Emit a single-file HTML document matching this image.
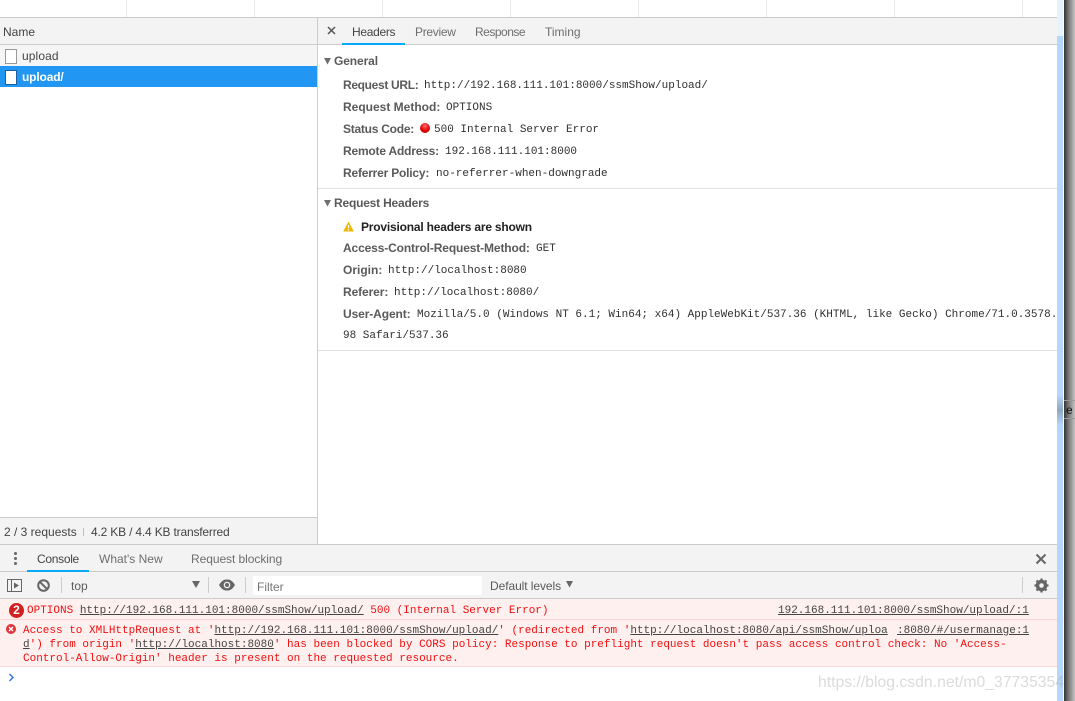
<!DOCTYPE html>
<html><head><meta charset="utf-8"><style>
html,body{margin:0;padding:0;background:#fff}
#p{position:relative;width:1075px;height:701px;overflow:hidden;background:#fff;font-family:"Liberation Sans",sans-serif;font-size:12px;color:#333}
#p div,#p span.a,#p svg{position:absolute}
.t{white-space:pre;line-height:16px;height:16px}
.m{font-family:"Liberation Mono",monospace;font-size:11px;white-space:pre;line-height:14px;height:14px}
.l{color:#5a5a5a;font-weight:bold;font-size:12px}
.g{color:#5a5a5a}
.k{color:#303030}
.r{color:#f00f0f}
u{color:#444;text-decoration:underline}
</style></head><body><div id="p">
<!-- top strip -->
<div style="left:126px;top:0;width:1px;height:17px;background:#e6e6e6"></div>
<div style="left:254px;top:0;width:1px;height:17px;background:#e6e6e6"></div>
<div style="left:382px;top:0;width:1px;height:17px;background:#e6e6e6"></div>
<div style="left:510px;top:0;width:1px;height:17px;background:#e6e6e6"></div>
<div style="left:638px;top:0;width:1px;height:17px;background:#e6e6e6"></div>
<div style="left:766px;top:0;width:1px;height:17px;background:#e6e6e6"></div>
<div style="left:894px;top:0;width:1px;height:17px;background:#e6e6e6"></div>
<div style="left:1022px;top:0;width:1px;height:17px;background:#e6e6e6"></div>
<div style="left:0;top:17px;width:1057px;height:1px;background:#ccc"></div>
<!-- header bar -->
<div style="left:0;top:18px;width:1057px;height:26px;background:#f3f3f3"></div>
<div style="left:0;top:44px;width:1057px;height:1px;background:#ccc"></div>
<div style="left:317px;top:18px;width:1px;height:527px;background:#ccc"></div>
<div class="t g" style="left:3px;top:24px;color:#444">Name</div>
<!-- rows -->
<div style="left:0;top:45px;width:317px;height:21px;background:#f5f5f5"></div>
<div style="left:0;top:66px;width:317px;height:21px;background:#2196f3"></div>
<div style="left:5px;top:49px;width:10px;height:13px;background:#fff;border:1px solid #999"></div>
<div style="left:5px;top:70px;width:10px;height:13px;background:#fff;border:1px solid #1a5fa0"></div>
<div class="t" style="left:22px;top:48px;color:#444;letter-spacing:.1px">upload</div>
<div class="t" style="left:22px;top:69px;color:#fff;font-weight:bold;letter-spacing:-.15px">upload/</div>
<!-- status bar -->
<div style="left:0;top:517px;width:317px;height:1px;background:#ccc"></div>
<div style="left:0;top:518px;width:317px;height:27px;background:#f3f3f3"></div>
<div class="t" style="left:4px;top:524px;color:#444">2 / 3 requests</div>
<div style="left:83px;top:528px;width:1px;height:8px;background:#9cc8e0"></div>
<div class="t" style="left:91px;top:524px;color:#444;letter-spacing:-.18px">4.2 KB / 4.4 KB transferred</div>
<!-- tabs -->
<svg style="left:327px;top:26px" width="9" height="9" viewBox="0 0 9 9"><path d="M1 1L8 8M8 1L1 8" stroke="#555" stroke-width="1.500"/></svg>
<div style="left:342px;top:43px;width:63px;height:2px;background:#03a9f4"></div>
<div class="t" style="left:352px;top:24px;color:#444;letter-spacing:-.3px">Headers</div>
<div class="t" style="left:415px;top:24px;color:#6e6e6e;letter-spacing:-.3px">Preview</div>
<div class="t" style="left:475px;top:24px;color:#6e6e6e;letter-spacing:-.5px">Response</div>
<div class="t" style="left:545px;top:24px;color:#6e6e6e">Timing</div>
<!-- General -->
<svg style="left:324px;top:58px" width="8" height="7"><path d="M0 0H7L3.500 6.500Z" fill="#6e6e6e"/></svg>
<div class="t l" style="left:334px;top:53px;letter-spacing:-.1px">General</div>
<div class="t l" style="left:343px;top:77px;letter-spacing:-.33px">Request URL:</div><div class="m k" style="left:424px;top:79px">http://192.168.111.101:8000/ssmShow/upload/</div>
<div class="t l" style="left:343px;top:99px">Request Method:</div><div class="m k" style="left:446px;top:101px">OPTIONS</div>
<div class="t l" style="left:343px;top:121px;letter-spacing:-.25px">Status Code:</div>
<div style="left:420px;top:123px;width:10px;height:10px;border-radius:50%;background:radial-gradient(circle at 50% 30%,#ff6b6b,#e00000 55%,#b00000)"></div>
<div class="m k" style="left:434px;top:123px">500 Internal Server Error</div>
<div class="t l" style="left:343px;top:143px;letter-spacing:-.2px">Remote Address:</div><div class="m k" style="left:445px;top:145px">192.168.111.101:8000</div>
<div class="t l" style="left:343px;top:165px;letter-spacing:-.2px">Referrer Policy:</div><div class="m k" style="left:436px;top:167px">no-referrer-when-downgrade</div>
<div style="left:318px;top:188px;width:739px;height:1px;background:#e0e0e0"></div>
<!-- Request Headers -->
<svg style="left:324px;top:200px" width="8" height="7"><path d="M0 0H7L3.500 6.500Z" fill="#6e6e6e"/></svg>
<div class="t l" style="left:334px;top:195px;letter-spacing:-.2px">Request Headers</div>
<svg style="left:343px;top:221px" width="11" height="11" viewBox="0 0 11 11"><path d="M5.500 0.500L10.800 10.500H0.200Z" fill="#f0b400"/><path d="M5.500 4V7.300M5.500 8.200V9.500" stroke="#fff" stroke-width="1.200"/></svg>
<div class="t" style="left:361px;top:219px;font-weight:bold;color:#222;letter-spacing:-.2px">Provisional headers are shown</div>
<div class="t l" style="left:343px;top:240px;letter-spacing:-.13px">Access-Control-Request-Method:</div><div class="m k" style="left:536px;top:242px">GET</div>
<div class="t l" style="left:343px;top:262px">Origin:</div><div class="m k" style="left:388px;top:264px">http://localhost:8080</div>
<div class="t l" style="left:343px;top:284px;letter-spacing:-.1px">Referer:</div><div class="m k" style="left:394px;top:286px">http://localhost:8080/</div>
<div class="t l" style="left:343px;top:306px;letter-spacing:-.1px">User-Agent:</div><div class="m k" style="left:417px;top:308px">Mozilla/5.0 (Windows NT 6.1; Win64; x64) AppleWebKit/537.36 (KHTML, like Gecko) Chrome/71.0.3578.</div>
<div class="m k" style="left:343px;top:329px">98 Safari/537.36</div>
<div style="left:318px;top:350px;width:739px;height:1px;background:#e0e0e0"></div>
<!-- drawer tabs -->
<div style="left:0;top:544px;width:1057px;height:1px;background:#ccc"></div>
<div style="left:0;top:545px;width:1057px;height:26px;background:#f3f3f3"></div>
<div style="left:0;top:571px;width:1057px;height:1px;background:#ccc"></div>
<div style="left:14px;top:552px;width:3px;height:3px;border-radius:50%;background:#666"></div>
<div style="left:14px;top:557px;width:3px;height:3px;border-radius:50%;background:#666"></div>
<div style="left:14px;top:562px;width:3px;height:3px;border-radius:50%;background:#666"></div>
<div class="t" style="left:37px;top:551px;color:#444;letter-spacing:-.3px">Console</div>
<div style="left:27px;top:570px;width:62px;height:2px;background:#03a9f4"></div>
<div class="t" style="left:99px;top:551px;color:#6e6e6e">What's New</div>
<div class="t" style="left:191px;top:551px;color:#6e6e6e;letter-spacing:-.06px">Request blocking</div>
<svg style="left:1035px;top:553px" width="12" height="12" viewBox="0 0 12 12"><path d="M1.500 1.500L10.500 10.500M10.500 1.500L1.500 10.500" stroke="#666" stroke-width="2"/></svg>
<!-- toolbar -->
<div style="left:0;top:572px;width:1057px;height:26px;background:#f3f3f3"></div>
<div style="left:0;top:598px;width:1057px;height:1px;background:#ccc"></div>
<svg style="left:7px;top:579px" width="15" height="13" viewBox="0 0 15 13"><rect x="0.500" y="0.500" width="14" height="12" fill="none" stroke="#666"/><path d="M4.500 1V12" stroke="#666"/><path d="M7 3.500L12 6.500L7 9.500Z" fill="#666"/></svg>
<svg style="left:37px;top:579px" width="13" height="13" viewBox="0 0 13 13"><circle cx="6.500" cy="6.500" r="5.300" fill="none" stroke="#666" stroke-width="2"/><path d="M2.800 2.800L10.200 10.200" stroke="#666" stroke-width="2"/></svg>
<div style="left:61px;top:577px;width:1px;height:16px;background:#ccc"></div>
<div class="t" style="left:71px;top:578px;color:#5a5a5a">top</div>
<svg style="left:192px;top:581px" width="8" height="7"><path d="M0 0H8L4 7Z" fill="#666"/></svg>
<div style="left:208px;top:577px;width:1px;height:16px;background:#ccc"></div>
<svg style="left:219px;top:579px" width="16" height="12" viewBox="0 0 16 12"><path d="M0 6C3 1 5.500 0.500 8 0.500S13 1 16 6C13 11 10.500 11.500 8 11.500S3 11 0 6Z" fill="#666"/><circle cx="8" cy="6" r="3.300" fill="#f3f3f3"/><circle cx="8" cy="6" r="2" fill="#666"/></svg>
<div style="left:245px;top:577px;width:1px;height:16px;background:#ccc"></div>
<div style="left:253px;top:576px;width:229px;height:19px;background:#fff"></div>
<div class="t" style="left:257px;top:579px;color:#757575">Filter</div>
<div class="t" style="left:490px;top:578px;color:#5a5a5a;letter-spacing:-.07px">Default levels</div>
<svg style="left:566px;top:581px" width="7" height="7"><path d="M0 0H7L3.500 6.500Z" fill="#666"/></svg>
<div style="left:1022px;top:577px;width:1px;height:16px;background:#ccc"></div>
<svg style="left:1034px;top:578px" width="15" height="15" viewBox="0 0 15 15"><circle cx="7.500" cy="7.500" r="4.300" fill="none" stroke="#666" stroke-width="3"/><path d="M7.500 0.500V14.500M0.500 7.500H14.500M2.500 2.500L12.500 12.500M12.500 2.500L2.500 12.500" stroke="#666" stroke-width="2.200"/><circle cx="7.500" cy="7.500" r="2.300" fill="#f3f3f3"/></svg>
<!-- messages -->
<div style="left:0;top:599px;width:1057px;height:20px;background:#fff0f0"></div>
<div style="left:0;top:619px;width:1057px;height:1px;background:#ffd6d6"></div>
<div style="left:0;top:620px;width:1057px;height:46px;background:#fff0f0"></div>
<div style="left:0;top:666px;width:1057px;height:1px;background:#ffd6d6"></div>
<div style="left:9px;top:603px;width:15px;height:15px;border-radius:50%;background:#d21f1f;color:#fff;font-weight:bold;font-size:12px;line-height:15px;text-align:center">2</div>
<div class="m r" style="left:27px;top:604px">OPTIONS <u>http://192.168.111.101:8000/ssmShow/upload/</u> 500 (Internal Server Error)</div>
<div class="m" style="left:778px;top:604px"><u>192.168.111.101:8000/ssmShow/upload/:1</u></div>
<svg style="left:6px;top:624px" width="10" height="10" viewBox="0 0 10 10"><circle cx="5" cy="5" r="5" fill="#e0343b"/><path d="M3 3L7 7M7 3L3 7" stroke="#fff" stroke-width="1.300"/></svg>
<div class="m r" style="left:23px;top:624px">Access to XMLHttpRequest at '<u>http://192.168.111.101:8000/ssmShow/upload/</u>' (redirected from '<u>http://localhost:8080/api/ssmShow/uploa</u></div>
<div class="m" style="left:897px;top:624px"><u>:8080/#/usermanage:1</u></div>
<div class="m r" style="left:23px;top:638px"><u>d</u>') from origin '<u>http://localhost:8080</u>' has been blocked by CORS policy: Response to preflight request doesn't pass access control check: No 'Access-</div>
<div class="m r" style="left:23px;top:652px">Control-Allow-Origin' header is present on the requested resource.</div>
<svg style="left:8px;top:673px" width="7" height="9" viewBox="0 0 7 9"><path d="M1.500 1L5 4.500L1.500 8" fill="none" stroke="#3b78e7" stroke-width="1.500"/></svg>
<!-- right edge -->
<div style="left:1057px;top:0;width:6px;height:36px;background:#e8f2fd"></div>
<div style="left:1057px;top:36px;width:6px;height:665px;background:#b5d7fb"></div>
<div style="left:1057px;top:395px;width:6px;height:30px;background:linear-gradient(#b5d7fb,#8fa8c4 50%,#b5d7fb)"></div>
<div style="left:1063px;top:0;width:1px;height:701px;background:#fff"></div>
<div style="left:1064px;top:0;width:11px;height:701px;background:linear-gradient(90deg,#333,#777 40%,#c4c4c4)"></div>
<div style="left:1064px;top:400px;width:11px;height:19px;border-top:1px solid #999;border-bottom:1px solid #999;box-sizing:border-box"></div>
<div class="t" style="left:1066px;top:402px;color:#111">e</div>
<!-- watermark -->
<div class="t" style="left:818px;top:673px;font-size:15.75px;line-height:20px;height:20px;color:rgba(170,170,170,.42)">https://blog.csdn.net/m0_37735354</div>
</div></body></html>
